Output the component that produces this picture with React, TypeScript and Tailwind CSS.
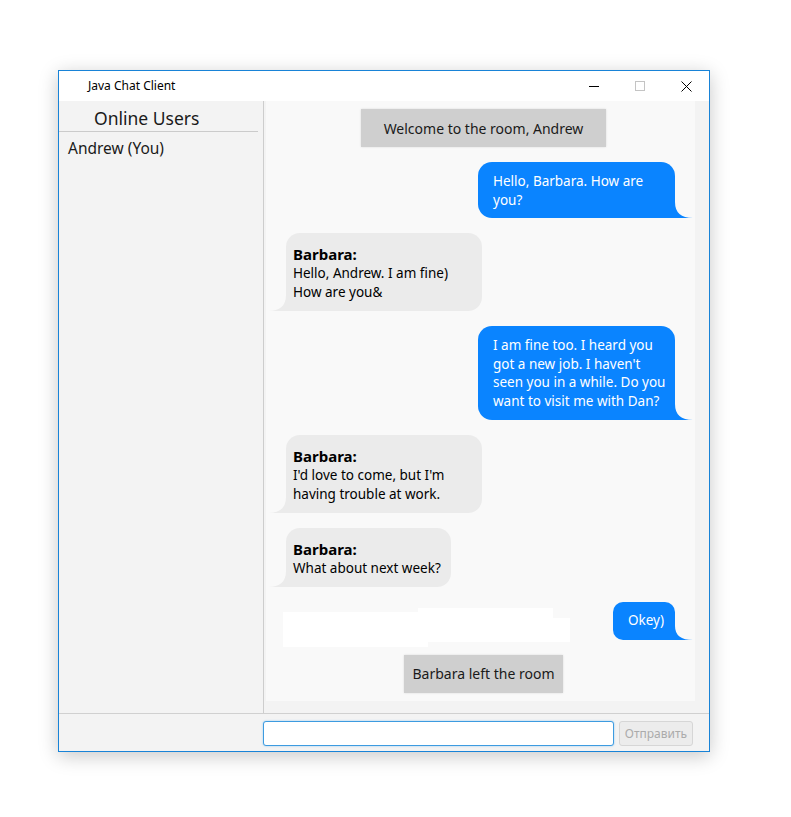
import React from 'react';

type Msg =
  | { kind: 'system'; text: string; width: number }
  | { kind: 'out'; lines: string[]; width: number }
  | { kind: 'in'; from: string; lines: string[]; width: number };

const messages: Msg[] = [
  { kind: 'system', text: 'Welcome to the room, Andrew', width: 245 },
  { kind: 'out', lines: ['Hello, Barbara. How are', 'you?'], width: 197 },
  { kind: 'in', from: 'Barbara:', lines: ['Hello, Andrew. I am fine)', 'How are you&'], width: 196 },
  {
    kind: 'out',
    lines: ['I am fine too. I heard you', 'got a new job. I haven\'t', 'seen you in a while. Do you', 'want to visit me with Dan?'],
    width: 197,
  },
  { kind: 'in', from: 'Barbara:', lines: ['I\'d love to come, but I\'m', 'having trouble at work.'], width: 196 },
  { kind: 'in', from: 'Barbara:', lines: ['What about next week?'], width: 165 },
];

const font = { fontFamily: '"Noto Sans", "Open Sans", sans-serif' };

const OutBubble: React.FC<{ lines: string[]; width: number }> = ({ lines, width }) => (
  <div className="flex justify-end pr-[20px]">
    <div
      className="relative rounded-[14px] rounded-br-none bg-[#0a84ff] pl-[15px] pr-[8px] pt-[10px] pb-[9px] text-[13.5px] leading-[18.6px] text-white"
      style={{ width }}
    >
      {lines.map((l) => (
        <div key={l} className="whitespace-nowrap">{l}</div>
      ))}
      <svg className="absolute bottom-0 right-[-18px]" width="18" height="16" viewBox="0 0 18 16">
        <path d="M0 0 Q0 16 18 16 L0 16 Z" fill="#0a84ff" />
      </svg>
    </div>
  </div>
);

const InBubble: React.FC<{ from: string; lines: string[]; width: number }> = ({ from, lines, width }) => (
  <div className="flex justify-start pl-[20px]">
    <div
      className="relative rounded-[14px] rounded-bl-none bg-[#ebebeb] pl-[7px] pr-[8px] pt-[11px] pb-[9px] text-[13.5px] leading-[19px] text-black"
      style={{ width }}
    >
      <div className="text-[15px] font-bold leading-[20px]">{from}</div>
      {lines.map((l) => (
        <div key={l} className="whitespace-nowrap">{l}</div>
      ))}
      <svg className="absolute bottom-0 left-[-18px]" width="18" height="16" viewBox="0 0 18 16">
        <path d="M18 0 Q18 16 0 16 L18 16 Z" fill="#ebebeb" />
      </svg>
    </div>
  </div>
);

const SystemBox: React.FC<{ text: string; width: number }> = ({ text, width }) => (
  <div className="flex justify-center pl-[6px]">
    <div
      className="flex h-[38px] items-center justify-center bg-[#cfcfcf] text-[14px] text-[#1a1a1a] shadow-[0_0_2px_rgba(0,0,0,0.12)]"
      style={{ width }}
    >
      {text}
    </div>
  </div>
);

export default function App() {
  return (
    <div className="min-h-[817px] w-[791px] bg-white pl-[58px] pt-[70px]" style={font}>
      <div className="flex h-[682px] w-[652px] flex-col border border-[#1883d7] bg-[#f3f3f3] shadow-[0_4px_18px_rgba(0,0,0,0.22)]">
        {/* title bar */}
        <div className="flex h-[30px] items-center bg-white">
          <span className="pl-[29px] text-[12px] text-black" style={{ fontFamily: '"Noto Sans", sans-serif' }}>
            Java Chat Client
          </span>
          <div className="ml-auto flex h-full items-center">
            <div className="flex h-full w-[46px] items-center justify-center">
              <svg width="10" height="10" viewBox="0 0 10 10">
                <line x1="0" y1="5.5" x2="10" y2="5.5" stroke="#000" strokeWidth="1" />
              </svg>
            </div>
            <div className="flex h-full w-[46px] items-center justify-center">
              <svg width="10" height="10" viewBox="0 0 10 10">
                <rect x="0.5" y="0.5" width="9" height="9" fill="none" stroke="#c4c4c4" strokeWidth="1" />
              </svg>
            </div>
            <div className="flex h-full w-[46px] items-center justify-center">
              <svg width="11" height="11" viewBox="0 0 11 11">
                <path d="M0.5 0.5 L10.5 10.5 M10.5 0.5 L0.5 10.5" stroke="#000" strokeWidth="1" />
              </svg>
            </div>
          </div>
        </div>

        {/* main */}
        <div className="flex h-[612px]">
          <div className="w-[204px] bg-[#f3f3f3]">
            <div className="mr-[5px] border-b border-[#cbcbcb] pl-[35px] pt-[5px] pb-[1px] text-[17.5px] leading-[24px] text-[#1a1a1a]">
              Online Users
            </div>
            <div className="pl-[9px] pt-[5px] text-[15.5px] leading-[22px] text-[#1a1a1a]">Andrew (You)</div>
          </div>
          <div className="w-px bg-[#cdcdcd]" />
          <div className="w-[2px]" />
          <div className="flex h-[600px] w-[429px] flex-col gap-[15px] bg-[#f9f9f9] pt-[8px]">
            {messages.map((m, i) => {
              if (m.kind === 'system') return <SystemBox key={i} text={m.text} width={m.width} />;
              if (m.kind === 'out') return <OutBubble key={i} lines={m.lines} width={m.width} />;
              return <InBubble key={i} from={m.from} lines={m.lines} width={m.width} />;
            })}
            <div className="relative">
              <div className="absolute left-[17px] top-[10px] h-[35px] w-[145px] bg-white" />
              <div className="absolute left-[152px] top-[6px] h-[34px] w-[135px] bg-white" />
              <div className="absolute left-[152px] top-[16px] h-[24px] w-[152px] bg-white" />
              <div className="flex justify-end pr-[20px]">
                <div className="relative flex h-[38px] w-[62px] items-center rounded-[10px] rounded-br-none bg-[#0a84ff] pl-[15px] text-[13.5px] text-white">
                  Okey)
                  <svg className="absolute bottom-0 right-[-18px]" width="18" height="14" viewBox="0 0 18 14">
                    <path d="M0 0 Q0 14 18 14 L0 14 Z" fill="#0a84ff" />
                  </svg>
                </div>
              </div>
            </div>
            <SystemBox text="Barbara left the room" width={159} />
          </div>
        </div>

        {/* bottom bar */}
        <div className="flex h-[38px] items-start border-t border-[#d0d0d0] bg-[#f3f3f3] pl-[204px] pt-[7px]">
          <div className="h-[25px] w-[351px] rounded-[3px] border border-[#3d9be0] bg-white shadow-[0_0_2px_#8cc4ee]" />
          <div className="ml-[5px] flex h-[25px] w-[74px] items-center justify-center rounded-[3px] border border-[#d6d6d6] bg-[#ececec] text-[12px] text-[#ababab]">
            Отправить
          </div>
        </div>
      </div>
    </div>
  );
}
